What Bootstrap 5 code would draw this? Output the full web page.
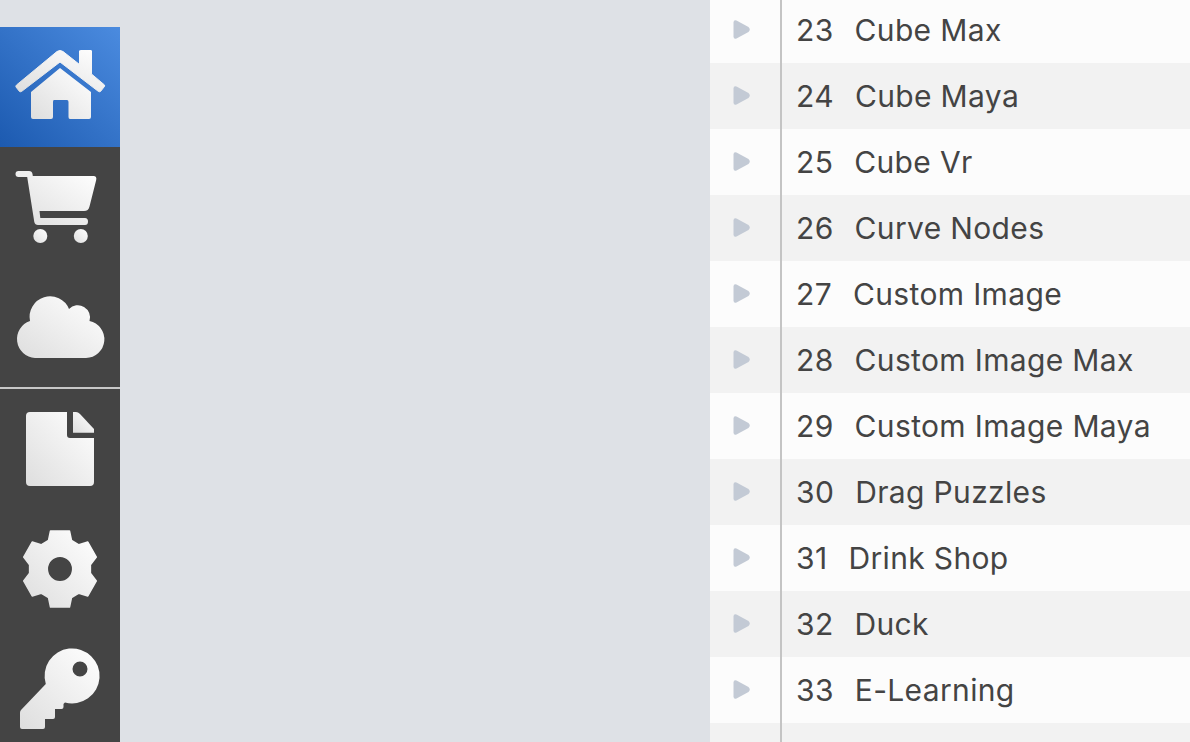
<!DOCTYPE html>
<html lang="en">
<head>
    <meta charset="UTF-8">
    <title>Samples</title>
    <link href="https://cdn.jsdelivr.net/npm/bootstrap@5.3.0/dist/css/bootstrap.min.css" rel="stylesheet">
    <style>
        html, body { height: 100%; overflow: hidden; }
        body { background: #dee1e6; font-family: "Inter", "Liberation Sans", sans-serif; color: #444; }
        .app-shell { height: 742px; overflow: hidden; }
        .side-bar { width: 120px; margin-top: 27px; background: #444; }
        .side-item { height: 120px; }
        .side-item svg { display: block; width: 120px; height: 120px; }
        .side-item.is-last, .side-item.is-last svg { height: 113px; }
        .side-item.is-active { background: linear-gradient(to top right, #1c5ab0, #4b8bdf); }
        .side-rule { height: 2px; background: #c8c8c8; }
        .sample-panel { width: 480px; margin-top: -3px; height: 745px; }
        .sample-row { height: 66px; background: #fcfcfc; font-size: 30px; letter-spacing: .35px; }
        .sample-row:nth-child(even) { background: #f2f2f2; }
        .sample-row.is-cut { height: 22px; }
        .arrow-cell { width: 72px; height: 100%; border-right: 2px solid #c4c4c4; padding-left: 23px; }
        .arrow-cell svg { margin-bottom: 1px; }
        .sample-num { margin-left: 14px; margin-right: 21px; }
    </style>
</head>
<body>
    <svg width="0" height="0" class="position-absolute">
        <defs>
            <linearGradient id="iconFill" x1="0" y1="1" x2="1" y2="0">
                <stop offset="0" stop-color="#dedede"/>
                <stop offset="1" stop-color="#ffffff"/>
            </linearGradient>
        </defs>
    </svg>

    <div class="app-shell d-flex">
        <nav class="side-bar flex-shrink-0">
            <div class="side-item is-active">
                <svg viewBox="0 0 120 120">
                    <path fill="url(#iconFill)" stroke="url(#iconFill)" stroke-width="1" stroke-linejoin="round" d="M57 24.500 Q60 22.500 63 24.500 L79.500 37.500 V24 Q79.500 23.500 80.500 23.500 H91 Q91.500 23.500 91.500 24 V47 L104.500 58 Q105 59 104 60 L100.500 64.500 Q99.500 65 98.500 64.500 L60 35 L21.500 64.500 Q20.500 65 19.500 64.500 L16 60 Q15.500 59 16.500 58 Z"/>
                    <path fill="url(#iconFill)" d="M60 41 L91 65 V90 Q91 92 89 92 H70 Q68.500 92 68.500 90 V75 Q68.500 73 67 73 H54 Q53 73 53 75 V90 Q53 92 51 92 H33 Q31 92 31 90 V65 Z"/>
                </svg>
            </div>
            <div class="side-item">
                <svg viewBox="0 0 120 120">
                    <path fill="url(#iconFill)" d="M18.500 24 H29 Q32 24 32.500 27 L32.800 29 H93.500 Q97 29 96.200 33 L89.500 59.500 Q88.500 64 84 64 H39.500 L40.300 71 H85 Q88 71 88 74.500 Q88 78 85 78 H38 Q35 78 34.300 75 L27.200 30 H18.500 Q15.500 30 15.500 27 Q15.500 24 18.500 24 Z"/>
                    <circle fill="url(#iconFill)" cx="40.300" cy="89" r="7"/>
                    <circle fill="url(#iconFill)" cx="80.800" cy="89" r="7"/>
                </svg>
            </div>
            <div class="side-item">
                <svg viewBox="0 0 120 120">
                    <path fill="url(#iconFill)" d="M35 91 A19 19 0 0 1 30 54 A20.500 20.500 0 0 1 69 42 A12.200 12.200 0 0 1 89.500 54 A18.700 18.700 0 0 1 86 91 Z"/>
                </svg>
            </div>
            <div class="side-rule"></div>
            <div class="side-item">
                <svg viewBox="0 0 120 120">
                    <path fill="url(#iconFill)" d="M30 23 H67 V46 Q67 49 70 49 H94 V93 Q94 97 90 97 H30 Q26 97 26 93 V27 Q26 23 30 23 Z"/>
                    <path fill="url(#iconFill)" d="M73 23 H76 Q78 23 80 25 L94 40 V43.700 H73 Z"/>
                </svg>
            </div>
            <div class="side-item">
                <svg viewBox="0 0 120 120">
                    <path fill="url(#iconFill)" stroke="url(#iconFill)" stroke-width="1.500" stroke-linejoin="round" fill-rule="evenodd" d="M48.500 31.500 L50.500 22 H69.500 L71.500 31.500 L78.900 35.800 L87.800 33 L96.300 48 L90.400 55.700 V64.300 L96.300 72 L87.800 87 L78.900 84.200 L71.500 88.500 L69.500 98 H50.500 L48.500 88.500 L41.100 84.200 L32.200 87 L23.700 72 L29.600 64.300 V55.700 L23.700 48 L32.200 33 L41.100 35.800 Z M60 47.300 A12.700 12.700 0 1 0 60 72.700 A12.700 12.700 0 1 0 60 47.300 Z"/>
                </svg>
            </div>
            <div class="side-item is-last">
                <svg viewBox="0 0 120 113">
                    <path fill="url(#iconFill)" fill-rule="evenodd" d="M45.800 55 A27.500 27.500 0 1 1 65 73.500 Q64 74 63.500 75 V78 Q63.500 80 61.500 80 H55 V88 Q55 90 53 90 H45 V98 Q45 100 43 100 H22 Q20 100 20 98 V84 Q20 82 21 81 Z M80 32.500 A7.500 7.500 0 1 0 80 47.500 A7.500 7.500 0 1 0 80 32.500 Z"/>
                </svg>
            </div>
        </nav>

        <div class="flex-grow-1"></div>

        <main class="sample-panel flex-shrink-0" id="samples"></main>
    </div>

    <script>
        const samples = ["Cube Max", "Cube Maya", "Cube Vr", "Curve Nodes", "Custom Image", "Custom Image Max",
            "Custom Image Maya", "Drag Puzzles", "Drink Shop", "Duck", "E-Learning", ""];
        const panel = document.getElementById("samples");
        samples.forEach((name, i) => {
            const row = document.createElement("div");
            row.className = "sample-row d-flex align-items-center" + (name ? "" : " is-cut");
            const label = name ? `<span class="sample-num">${23 + i}</span><span>${name}</span>` : "";
            const arrow = name ? `<svg width="18" height="20" viewBox="0 0 18 20"><path fill="#c3cad5" d="M0.500 2.500 Q0.500 -0.300 3.500 0.500 L15.500 7 Q18 9.500 15.500 12 L3.500 18.500 Q0.500 19.300 0.500 16.500 Z"/></svg>` : "";
            row.innerHTML = `<div class="arrow-cell d-flex align-items-center">${arrow}</div>${label}`;
            panel.appendChild(row);
        });
    </script>
</body>
</html>
